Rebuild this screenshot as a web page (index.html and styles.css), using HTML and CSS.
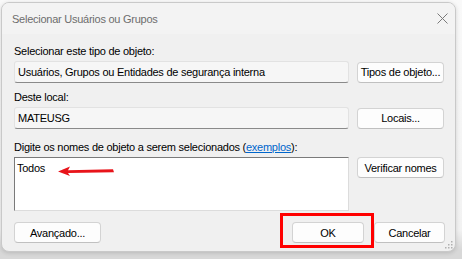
FILE: index.html
```html
<!DOCTYPE html>
<html lang="pt-BR">
<head>
  <meta charset="UTF-8" />
  <title>Selecionar Usuários ou Grupos</title>
  <link rel="stylesheet" href="styles.css">
</head>
<body>
  <div class="desktop">
    <div class="dialog">
      <div class="titlebar">
        <span class="title">Selecionar Usuários ou Grupos</span>
        <svg class="close" width="11" height="11" viewBox="0 0 11 11">
          <path d="M0.5 0.5L10.5 10.5M10.5 0.5L0.5 10.5" stroke="#7a7a7a" stroke-width="1" fill="none" />
        </svg>
      </div>
      <div class="content">
        <label>Selecionar este tipo de objeto:</label>
        <div class="row">
          <div class="field">Usuários, Grupos ou Entidades de segurança interna</div>
          <button>Tipos de objeto...</button>
        </div>
        <label>Deste local:</label>
        <div class="row row-last">
          <div class="field">MATEUSG</div>
          <button>Locais...</button>
        </div>
        <label>Digite os nomes de objeto a serem selecionados (<a href="#">exemplos</a>):</label>
        <div class="row names-row">
          <div class="names">
            Todos
            <svg class="arrow" width="58" height="10" viewBox="0 0 58 10">
              <path d="M0 5.5L12 0.5L10 4.2L55 3.2L56 6.2L10 7L12 10Z" fill="#e8141a" />
            </svg>
          </div>
          <button>Verificar nomes</button>
        </div>
        <div class="footer">
          <button class="advanced">Avançado...</button>
          <div class="actions">
            <div class="highlight"><button class="ok">OK</button></div>
            <button class="cancel">Cancelar</button>
          </div>
        </div>
      </div>
      <svg class="grip" width="8" height="8" viewBox="0 0 8 8">
        <rect x="6" y="0" width="1.5" height="1.5" fill="#b0b0b0" />
        <rect x="3" y="3" width="1.5" height="1.5" fill="#b0b0b0" />
        <rect x="6" y="3" width="1.5" height="1.5" fill="#b0b0b0" />
        <rect x="0" y="6" width="1.5" height="1.5" fill="#b0b0b0" />
        <rect x="3" y="6" width="1.5" height="1.5" fill="#b0b0b0" />
        <rect x="6" y="6" width="1.5" height="1.5" fill="#b0b0b0" />
      </svg>
    </div>
  </div>
</body>
</html>
```

FILE: styles.css
```css
body {
  margin: 0;
  font-family: "Liberation Sans", Arial, sans-serif;
  font-size: 11px;
  letter-spacing: -0.25px;
  color: #000;
  background: #e9e9e9;
}
.desktop {
  width: 462px;
  height: 259px;
  overflow: hidden;
  padding: 2px 0 0 1px;
  box-sizing: border-box;
  background: linear-gradient(#f9f9f9 0, #f2f2f2 230px, #d8d8d8 250px);
}
.dialog {
  position: relative;
  width: 455px;
  height: 250px;
  background: #f0f0f0;
  border: 1px solid #c9c9c9;
  border-radius: 8px;
  box-sizing: border-box;
  box-shadow: 0 1px 4px rgba(0,0,0,0.15);
  overflow: hidden;
}
.titlebar {
  height: 31px;
  background: #f3f3f3;
  display: flex;
  align-items: center;
  justify-content: space-between;
  padding: 0 7px 0 10px;
}
.title {
  color: #6d6d6d;
}
.content {
  padding: 9px 10px 0 12px;
}
label {
  display: block;
  height: 16px;
  line-height: 16px;
  margin-bottom: 2px;
  white-space: nowrap;
}
a {
  color: #0066cc;
}
.row {
  display: flex;
  align-items: center;
  gap: 8px;
  margin-bottom: 6px;
}
.row-last {
  margin-bottom: 10px;
}
.names-row {
  align-items: flex-start;
  margin-bottom: 2px;
}
.field {
  width: 335px;
  height: 22px;
  line-height: 21px;
  padding: 0 3px;
  box-sizing: border-box;
  background: #f6f6f6;
  border: 1px solid #e2e2e2;
  border-bottom-color: #8a8a8a;
  border-radius: 3px;
  white-space: nowrap;
  overflow: hidden;
}
button {
  font-family: inherit;
  font-size: 11px;
  letter-spacing: -0.25px;
  width: 87px;
  height: 21px;
  padding: 0;
  background: #fdfdfd;
  border: 1px solid #d3d3d3;
  border-bottom-color: #c0c0c0;
  border-radius: 4px;
  color: #000;
  white-space: nowrap;
}
.names {
  position: relative;
  width: 335px;
  height: 54px;
  padding: 1px 2px;
  box-sizing: border-box;
  background: #fff;
  border: 1px solid #dcdcdc;
  border-top-color: #7a7a7a;
  border-left-color: #7a7a7a;
  line-height: 18px;
}
.arrow {
  position: absolute;
  left: 43px;
  top: 8px;
}
.footer {
  display: flex;
  justify-content: space-between;
  align-items: flex-start;
}
.advanced {
  margin-top: 9px;
}
.actions {
  display: flex;
  align-items: flex-start;
}
.highlight {
  border: 3px solid #f00;
  padding: 6px 7px 2px 9px;
}
.ok {
  width: 72px;
}
.cancel {
  width: 71px;
  margin-top: 9px;
}
.grip {
  position: absolute;
  right: 2px;
  bottom: 2px;
}
```
